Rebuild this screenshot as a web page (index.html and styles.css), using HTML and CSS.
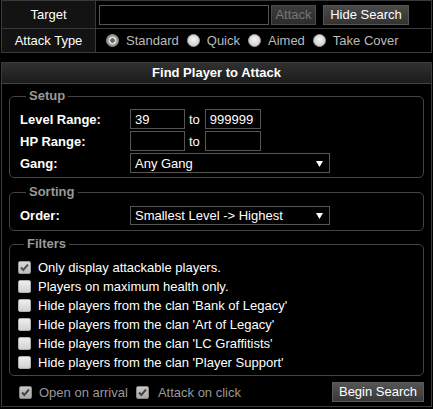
FILE: index.html
```html
<!DOCTYPE html>
<html>
<head>
<meta charset="utf-8">
<link rel="stylesheet" href="styles.css">
</head>
<body>
<div class="page">
  <table class="top">
    <tr class="r1">
      <td class="lbl">Target</td>
      <td class="val">
        <div class="trow">
          <input class="tin" type="text" value="">
          <button class="btn dis">Attack</button>
          <button class="btn hide">Hide Search</button>
        </div>
      </td>
    </tr>
    <tr class="r2">
      <td class="lbl">Attack Type</td>
      <td class="val">
        <div class="radios">
          <span class="opt"><span class="rb on"></span><span class="rl">Standard</span></span>
          <span class="opt"><span class="rb"></span><span class="rl">Quick</span></span>
          <span class="opt"><span class="rb"></span><span class="rl">Aimed</span></span>
          <span class="opt"><span class="rb"></span><span class="rl">Take Cover</span></span>
        </div>
      </td>
    </tr>
  </table>

  <div class="panel">
    <div class="phead">Find Player to Attack</div>
    <div class="pbody">
      <fieldset class="grp setup">
        <legend>Setup</legend>
        <div class="frow">
          <span class="flbl">Level Range:</span>
          <input class="num" type="text" value="39">
          <span class="to">to</span>
          <input class="num n2" type="text" value="999999">
        </div>
        <div class="frow">
          <span class="flbl">HP Range:</span>
          <input class="num" type="text" value="">
          <span class="to">to</span>
          <input class="num n2" type="text" value="">
        </div>
        <div class="frow">
          <span class="flbl">Gang:</span>
          <div class="sel"><span class="stxt">Any Gang</span><svg class="arr" width="7" height="6" viewBox="0 0 7 6"><path d="M0 0H7L3.5 6Z" fill="#fff"/></svg></div>
        </div>
      </fieldset>

      <fieldset class="grp sorting">
        <legend>Sorting</legend>
        <div class="frow">
          <span class="flbl">Order:</span>
          <div class="sel s2"><span class="stxt">Smallest Level -&gt; Highest</span><svg class="arr" width="7" height="6" viewBox="0 0 7 6"><path d="M0 0H7L3.5 6Z" fill="#fff"/></svg></div>
        </div>
      </fieldset>

      <fieldset class="grp filters">
        <legend>Filters</legend>
        <div class="crow"><span class="cb chk dim"><svg width="13" height="13" viewBox="0 0 13 13"><path d="M3 6.5L5.3 9L10 3.5" stroke="#555" stroke-width="2" fill="none"/></svg></span><span>Only display attackable players.</span></div>
        <div class="crow"><span class="cb"></span><span>Players on maximum health only.</span></div>
        <div class="crow"><span class="cb"></span><span>Hide players from the clan 'Bank of Legacy'</span></div>
        <div class="crow"><span class="cb"></span><span>Hide players from the clan 'Art of Legacy'</span></div>
        <div class="crow"><span class="cb"></span><span>Hide players from the clan 'LC Graffitists'</span></div>
        <div class="crow"><span class="cb"></span><span>Hide players from the clan 'Player Support'</span></div>
      </fieldset>

      <div class="foot">
        <div class="fopts">
          <span class="cb chk dim2"><svg width="13" height="13" viewBox="0 0 13 13"><path d="M3 6.5L5.3 9L10 3.5" stroke="#444" stroke-width="2" fill="none"/></svg></span><span class="ftxt">Open on arrival</span>
          <span class="cb chk dim2 c2"><svg width="13" height="13" viewBox="0 0 13 13"><path d="M3 6.5L5.3 9L10 3.5" stroke="#444" stroke-width="2" fill="none"/></svg></span><span class="ftxt">Attack on click</span>
        </div>
        <button class="btn begin">Begin Search</button>
      </div>
    </div>
  </div>
</div>
</body>
</html>
```

FILE: styles.css
```css
* { box-sizing: border-box; }
body {
  margin: 0;
  background: #000;
  font-family: "Liberation Sans", Arial, sans-serif;
  font-size: 13px;
  color: #fff;
}
.page { padding-left: 1px; width: 433px; }

.top { border-collapse: collapse; width: 431px; }
.top td { border: 1px solid #3a3a3a; padding: 0; }
.r1 td { height: 28px; }
.r2 td { height: 24px; }
.lbl { width: 94px; background: #131313; text-align: center; color: #fff; }
.val { background: #000; padding-left: 3px !important; }

.trow { display: flex; align-items: center; padding-top: 1px; }
.tin {
  width: 170px; height: 20px;
  background: #000; border: 1px solid #555; color: #fff;
  font: 13px "Liberation Sans", Arial, sans-serif;
  padding: 0 4px; outline: none;
}
.btn {
  height: 20px; padding: 0 6px;
  font: 13px "Liberation Sans", Arial, sans-serif;
  color: #fff;
  background: linear-gradient(#4a4a4a, #333);
  border: 1px solid #555;
  border-radius: 0;
  line-height: 18px;
}
.btn.dis { margin-left: 2px; width: 45px; padding: 0; color: #777; background: linear-gradient(#3c3c3c, #2c2c2c); border-color: #4a4a4a; }
.btn.hide { margin-left: 7px; width: 86px; padding: 0; }

.radios { display: flex; align-items: center; padding-left: 7px; color: #bbb; }
.opt { display: flex; align-items: center; margin-right: 8px; }
.rb {
  width: 13px; height: 13px; border-radius: 50%;
  background: radial-gradient(circle at 50% 40%, #f4f4f4, #c4c4c4);
  border: 1px solid #999;
  margin-right: 7px;
}
.rb.on { background: radial-gradient(circle, #666 0 2px, #e4e4e4 2.6px 3.6px, #9a9a9a 4.2px); border-color: #888; }

.panel {
  margin-top: 9px;
  width: 431px;
  border: 1px solid #3c3c3c;
  background: #000;
}
.phead {
  height: 21px;
  background: linear-gradient(#303030, #1b1b1b);
  border-bottom: 1px solid #444;
  text-align: center;
  font-weight: bold;
  line-height: 20px;
}
.pbody { padding: 0 7px 5px; }

.grp {
  margin: 0;
  border: 1px solid #444;
  border-radius: 5px;
  padding: 0 10px;
}
.grp legend {
  color: #999;
  font-weight: bold;
  line-height: 14px;
  padding: 0 3px;
  margin-left: 6px;
}
.setup { margin-top: 5px; padding-top: 6px; padding-bottom: 4px; }
.sorting { margin-top: 7px; padding-top: 6px; padding-bottom: 5px; }
.filters { margin-top: 6px; padding-top: 7px; padding-bottom: 3px; padding-left: 8px; }

.frow { display: flex; align-items: center; height: 20px; margin-bottom: 2px; }
.frow:last-child { margin-bottom: 0; }
.flbl { width: 110px; font-weight: bold; }
.num {
  width: 55px; height: 20px;
  background: #000; border: 1px solid #555; color: #fff;
  font: 13px "Liberation Sans", Arial, sans-serif;
  padding: 0 4px; outline: none;
}
.num.n2 { width: 56px; }
.to { margin: 0 5px 0 4px; }
.sel {
  width: 200px; height: 20px;
  border: 1px solid #555; background: #000;
  display: flex; align-items: center; justify-content: space-between;
  padding: 0 6px 0 4px;
}
.sel.s2 { height: 19px; }
.arr { margin-top: 1px; }

.crow { display: flex; align-items: center; height: 19px; }
.cb {
  width: 13px; height: 13px; flex: none;
  border-radius: 2px;
  background: linear-gradient(#eee, #d2d2d2);
  border: 1px solid #b0b0b0;
  margin-right: 7px;
  display: flex; align-items: center; justify-content: center;
}
.cb svg { display: block; margin: -1px; }
.cb.dim { background: linear-gradient(#d8d8d8, #bcbcbc); border-color: #999; }
.cb.dim2 { background: linear-gradient(#c8c8c8, #aaa); border-color: #888; }

.foot { display: flex; align-items: center; justify-content: space-between; margin-top: 6px; height: 19px; padding-left: 10px; }
.fopts { display: flex; align-items: center; padding-top: 2px; }
.ftxt { color: #999; }
.cb.c2 { margin-left: 8px; margin-right: 9px; }
.btn.begin { width: 92px; padding: 0; background: linear-gradient(#555, #383838); border-color: #5a5a5a; margin-right: 0; }
```
